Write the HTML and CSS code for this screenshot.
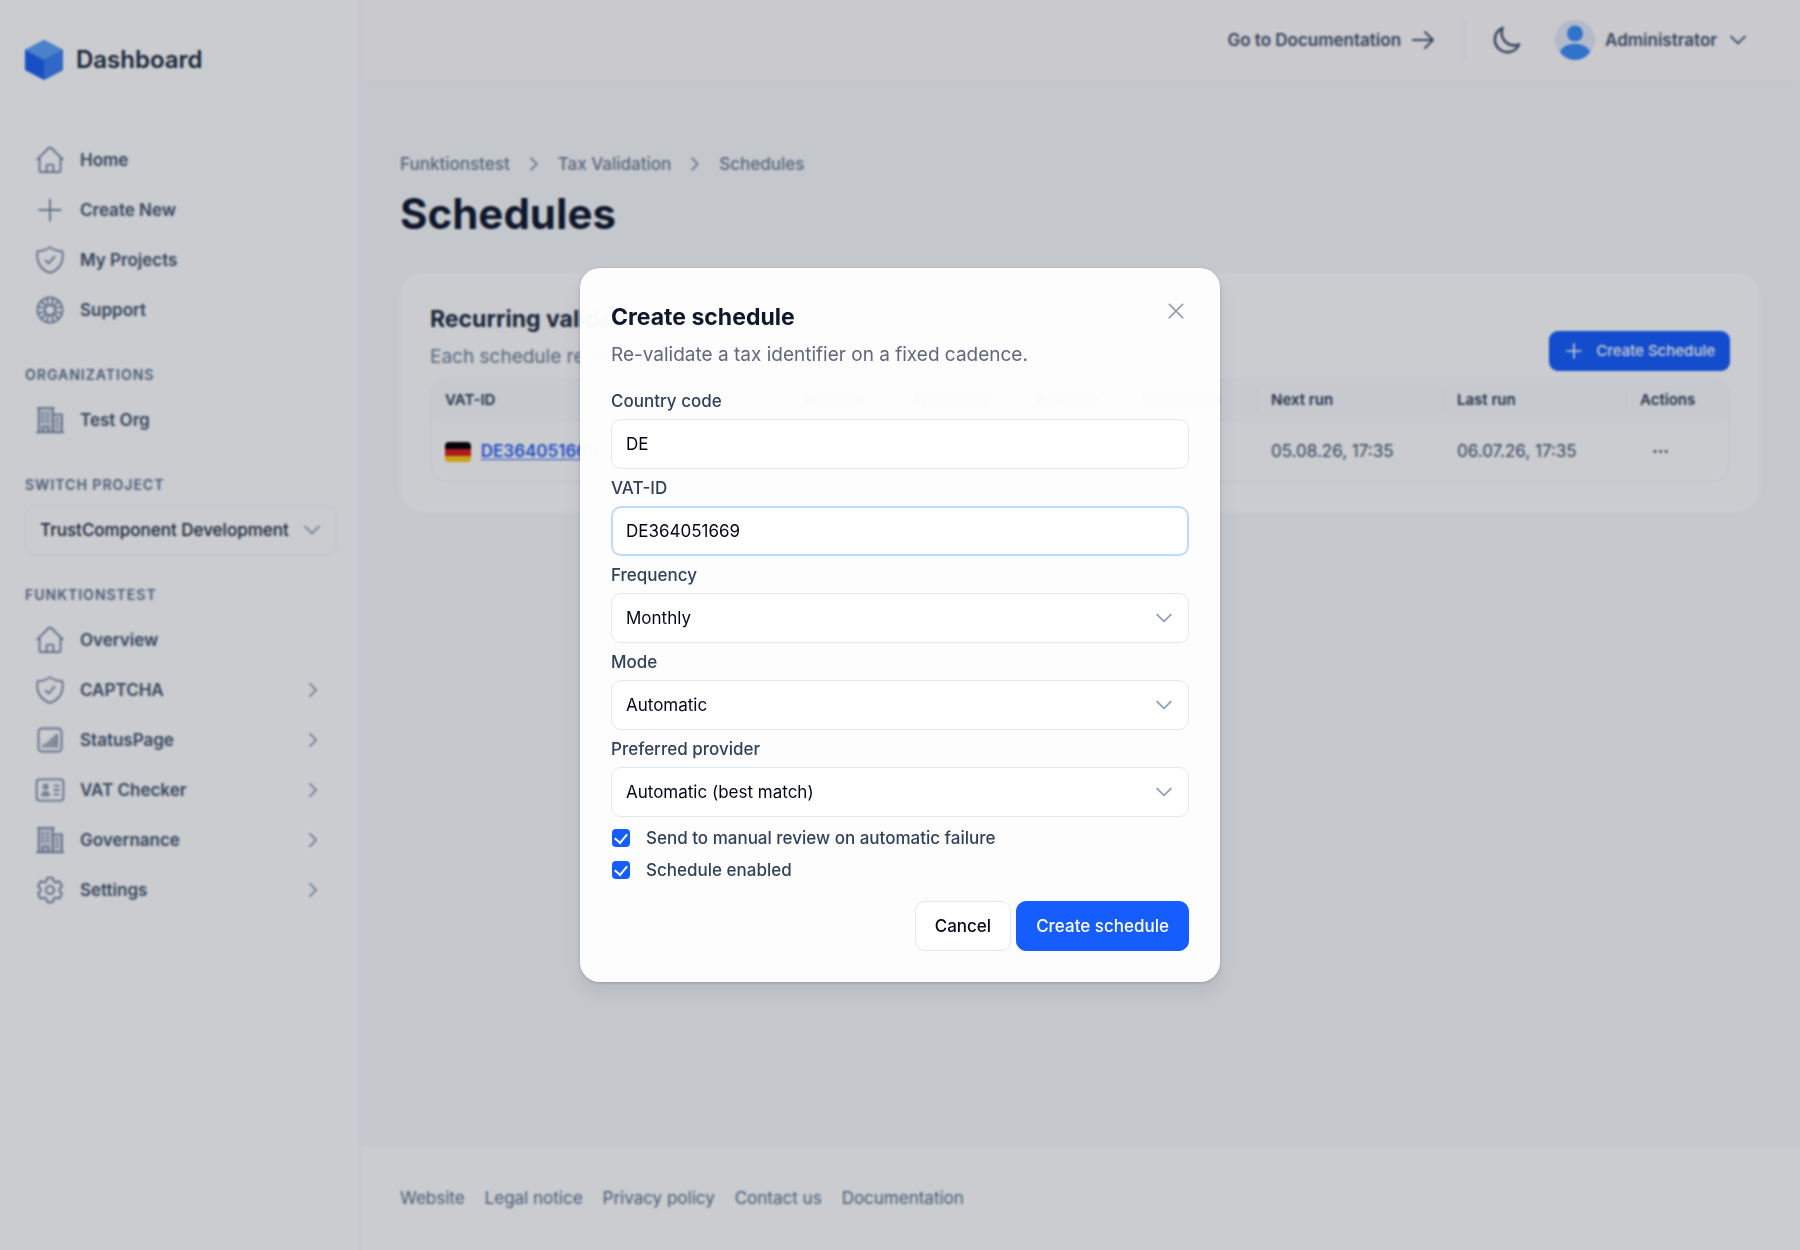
FILE: index.html
```html
<!DOCTYPE html>
<html lang="en">
  <head>
    <meta charset="utf-8">
    <title>Schedules - Dashboard</title>
    <meta name="viewport" content="width=device-width, initial-scale=1">
    <link rel="stylesheet" href="styles.css">
  </head>
  <body>
    <!-- icons used more than once -->
    <svg class="sprite" aria-hidden="true">
      <symbol id="home" viewBox="0 0 24 24"><path d="M1.800 11.500L11.200 2.200a1.130 1.130 0 0 1 1.600 0L22.200 11.500M3.600 10v10.500c0 .6.500 1.100 1.100 1.100h14.600c.6 0 1.100-.5 1.100-1.100V10M9.300 21.600v-4.800c0-.6.500-1.100 1.100-1.100h3.200c.6 0 1.100.5 1.100 1.100v4.800"/></symbol>
      <symbol id="shield" viewBox="0 0 24 24"><path d="M8.500 12.500L11 14.800 15.500 9.300M12 1.700A15 15 0 0 1 2.200 4.900C1.800 6.200 1.800 7.600 1.800 9c0 6.200 4.200 11.500 10.200 13.300C18 20.500 22.200 15.200 22.200 9c0-1.400 0-2.800-.4-4.100A15 15 0 0 1 12 1.700z"/></symbol>
      <symbol id="building" viewBox="0 0 24 24"><path class="shade" d="M3 2.250h11.250v19.500H3zM14.250 7.500h7.250v14.250h-7.250z"/><path d="M1.500 21.800h21M3 2.250v19.500m11.250-19.500v19.500M21.500 7.500v14.250M6 6.750h.75m-.75 3h.75m-.75 3h.75m3-6h.75m-.75 3h.75m-.75 3h.75M6.200 21.750v-3.400c0-.6.5-1.100 1.100-1.100h2.300c.6 0 1.100.5 1.100 1.100v3.400M2.250 2.250h12.750M14.250 7.500h7.500M17.250 11.250h.7m-.7 3h.7m-.7 3h.7"/></symbol>
      <symbol id="plus" viewBox="0 0 24 24"><path d="M12 3.500v17M3.500 12h17"/></symbol>
      <symbol id="right" viewBox="0 0 24 24"><path d="M8.250 4.500l7.500 7.500-7.500 7.500"/></symbol>
      <symbol id="down" viewBox="0 0 24 24"><path d="M19.500 8.250l-7.500 7.500-7.500-7.500"/></symbol>
    </svg>

    <div class="app">
      <aside class="sidebar">
        <a class="brand" href="#">
          <svg class="brand-logo" viewBox="0 0 38 40">
            <path d="M19 0l19 10v20L19 40 0 30V10z" fill="#1d5ff0"/>
            <path d="M19 0l19 10-19 10L0 10z" fill="#5ba0f7"/>
            <path d="M38 10v20L19 40V20z" fill="#3b7ff2"/>
          </svg>
          <span>Dashboard</span>
        </a>

        <nav class="nav">
          <a href="#"><svg class="icon"><use href="#home"/></svg>Home</a>
          <a href="#"><svg class="icon"><use href="#plus"/></svg>Create New</a>
          <a href="#"><svg class="icon"><use href="#shield"/></svg>My Projects</a>
          <a href="#"><svg class="icon" viewBox="0 0 24 24"><circle cx="12" cy="12" r="10"/><circle cx="12" cy="12" r="4"/><path d="M9.500 2.500l1 5.500M14.500 2.500l-1 5.500M9.500 21.500l1-5.500M14.500 21.500l-1-5.500M2.500 9.500l5.500 1M2.500 14.500l5.500-1M21.500 9.500l-5.500 1M21.500 14.500l-5.500-1M5 5l4 4M19 5l-4 4M5 19l4-4M19 19l-4-4"/></svg>Support</a>
        </nav>

        <h2 class="nav-title">Organizations</h2>
        <nav class="nav">
          <a href="#"><svg class="icon"><use href="#building"/></svg>Test Org</a>
        </nav>

        <label class="nav-title" for="project">Switch project</label>
        <div class="select project-select">
          <select id="project"><option>TrustComponent Development</option></select>
          <svg class="icon"><use href="#down"/></svg>
        </div>

        <h2 class="nav-title">Funktionstest</h2>
        <nav class="nav">
          <a href="#"><svg class="icon"><use href="#home"/></svg>Overview</a>
          <a href="#"><svg class="icon"><use href="#shield"/></svg>CAPTCHA<svg class="icon arrow"><use href="#right"/></svg></a>
          <a href="#"><svg class="icon" viewBox="0 0 24 24"><rect x="2.800" y="2.800" width="18.400" height="18.400" rx="2.800"/><path d="M6.500 17.500v-1.500M8.800 17.500V15M11 17.500v-4.500M13.300 17.500v-6.500M15.500 17.500v-8.500M17.500 17.500V7.500"/></svg>StatusPage<svg class="icon arrow"><use href="#right"/></svg></a>
          <a href="#"><svg class="icon" viewBox="0 0 24 24"><rect x="1.300" y="3.500" width="21.400" height="17" rx="2.500"/><circle class="solid" cx="8.500" cy="9.300" r="2.500"/><path class="solid" d="M4.800 16.500c0-5 7.400-5 7.400 0-2 1-5.400 1-7.400 0z"/><path d="M15.500 8.500H19M15.500 12H19M15.500 15.500H19"/></svg>VAT Checker<svg class="icon arrow"><use href="#right"/></svg></a>
          <a href="#"><svg class="icon"><use href="#building"/></svg>Governance<svg class="icon arrow"><use href="#right"/></svg></a>
          <a href="#"><svg class="icon" viewBox="1 1 22 22"><path d="M9.600 3.900c.1-.5.500-.9 1.100-.9h2.600c.5 0 1 .4 1.100.9l.2 1.300c.1.400.3.700.6.800l.3.200c.3.200.7.200 1.100.1l1.200-.5c.5-.2 1.100 0 1.400.5l1.300 2.200c.3.500.2 1.100-.3 1.400l-1 .9c-.3.200-.4.600-.4 1v.3c0 .4.100.7.400 1l1 .8c.4.400.5 1 .3 1.400l-1.300 2.300c-.3.500-.9.700-1.400.5l-1.200-.5c-.4-.1-.8-.1-1.100.1l-.3.200c-.3.200-.5.500-.6.800l-.2 1.300c-.1.600-.6 1-1.100 1h-2.600c-.6 0-1-.4-1.100-1l-.2-1.200c-.1-.4-.3-.7-.6-.9l-.3-.2c-.3-.2-.7-.2-1.100-.1l-1.200.5c-.5.200-1.100 0-1.400-.5l-1.300-2.300c-.3-.400-.2-1 .3-1.400l1-.8c.3-.3.400-.6.400-1v-.3c0-.400-.1-.8-.4-1l-1-.9c-.500-.3-.600-.9-.3-1.400l1.300-2.200c.3-.5.900-.7 1.400-.5l1.200.5c.4.100.8.100 1.100-.1l.3-.2c.3-.1.500-.4.600-.8z"/><circle cx="12" cy="12" r="3"/></svg>Settings<svg class="icon arrow"><use href="#right"/></svg></a>
        </nav>
      </aside>

      <div class="page">
        <header class="topbar">
          <a class="docs" href="#">Go to Documentation <svg class="icon" viewBox="0 0 24 24"><path d="M14 4l8 8-8 8M22 12H2"/></svg></a>
          <button class="theme" type="button" aria-label="Dark mode"><svg class="icon" viewBox="0 0 24 24"><path d="M21.750 15A9.700 9.700 0 0 1 18 15.750 9.750 9.750 0 0 1 9 2.250 9.750 9.750 0 1 0 21.750 15z"/></svg></button>
          <button class="user" type="button">
            <svg class="avatar" viewBox="0 0 40 40"><circle cx="20" cy="20" r="20" fill="#e3e8f8"/><circle cx="20" cy="13.500" r="8" fill="#3c8df8"/><path d="M5 32c4-11 26-11 30 0-7 10.500-23 10.500-30 0z" fill="#3c8df8"/></svg>
            Administrator
            <svg class="icon"><use href="#down"/></svg>
          </button>
        </header>

        <main class="content">
          <nav class="breadcrumb">
            <a href="#">Funktionstest</a>
            <svg class="icon"><use href="#right"/></svg>
            <a href="#">Tax Validation</a>
            <svg class="icon"><use href="#right"/></svg>
            <a href="#">Schedules</a>
          </nav>
          <h1>Schedules</h1>

          <section class="card">
            <div class="card-head">
              <div>
                <h2>Recurring validations</h2>
                <p>Each schedule re-validates</p>
              </div>
              <button class="btn-small" type="button"><svg class="icon"><use href="#plus"/></svg>Create Schedule</button>
            </div>
            <table>
              <thead>
                <tr>
                  <th class="col-vat">VAT-ID</th>
                  <th class="col-enabled">Enabled</th>
                  <th class="col-frequency">Frequency</th>
                  <th class="col-mode">Advance</th>
                  <th>Requested</th>
                  <th class="col-next">Next run</th>
                  <th class="col-last">Last run</th>
                  <th class="col-actions">Actions</th>
                </tr>
              </thead>
              <tbody>
                <tr>
                  <td>
                    <svg class="flag" viewBox="0 0 26 20"><path fill="#000" d="M0 0h26v7H0z"/><path fill="#d81e1e" d="M0 7h26v7H0z"/><path fill="#fdca0f" d="M0 14h26v6H0z"/></svg>
                    <a href="#">DE364051669</a>
                  </td>
                  <td></td>
                  <td></td>
                  <td></td>
                  <td></td>
                  <td>05.08.26, 17:35</td>
                  <td>06.07.26, 17:35</td>
                  <td><button class="more" type="button" aria-label="More">&middot;&middot;&middot;</button></td>
                </tr>
              </tbody>
            </table>
          </section>
        </main>

        <footer class="footer">
          <a href="#">Website</a>
          <a href="#">Legal notice</a>
          <a href="#">Privacy policy</a>
          <a href="#">Contact us</a>
          <a href="#">Documentation</a>
        </footer>
      </div>
    </div>

    <div class="backdrop">
      <form class="modal" role="dialog" aria-labelledby="modal-title">
        <button class="close" type="button" aria-label="Close"><svg class="icon" viewBox="0 0 24 24"><path d="M3 3l18 18M21 3L3 21"/></svg></button>
        <h2 id="modal-title">Create schedule</h2>
        <p class="lead">Re-validate a tax identifier on a fixed cadence.</p>

        <div class="field">
          <label for="country">Country code</label>
          <input id="country" type="text" value="DE">
        </div>
        <div class="field">
          <label for="vat">VAT-ID</label>
          <input id="vat" class="active" type="text" value="DE364051669">
        </div>
        <div class="field">
          <label for="frequency">Frequency</label>
          <div class="select">
            <select id="frequency"><option>Monthly</option></select>
            <svg class="icon"><use href="#down"/></svg>
          </div>
        </div>
        <div class="field">
          <label for="mode">Mode</label>
          <div class="select">
            <select id="mode"><option>Automatic</option></select>
            <svg class="icon"><use href="#down"/></svg>
          </div>
        </div>
        <div class="field">
          <label for="provider">Preferred provider</label>
          <div class="select">
            <select id="provider"><option>Automatic (best match)</option></select>
            <svg class="icon"><use href="#down"/></svg>
          </div>
        </div>

        <label class="check"><input type="checkbox" checked>Send to manual review on automatic failure</label>
        <label class="check"><input type="checkbox" checked>Schedule enabled</label>

        <div class="actions">
          <button class="btn" type="button">Cancel</button>
          <button class="btn primary" type="button">Create schedule</button>
        </div>
      </form>
    </div>
  </body>
</html>
```

FILE: styles.css
```css
* {
  box-sizing: border-box;
}
body {
  margin: 0;
  font-family: Inter, "Liberation Sans", sans-serif;
  font-size: 17px;
  line-height: 28px;
  color: #314158;
}
h1, h2, p {
  margin: 0;
}
a {
  color: inherit;
  text-decoration: none;
}
button, input, select {
  font: inherit;
  color: inherit;
}
button {
  border: 0;
  padding: 0;
  background: none;
}
.sprite {
  display: none;
}
.icon {
  width: 30px;
  height: 30px;
  flex: none;
  fill: none;
  stroke: currentColor;
  stroke-width: 1.5;
  stroke-linecap: round;
  stroke-linejoin: round;
}
.shade {
  fill: currentColor;
  fill-opacity: 0.3;
  stroke: none;
}
.solid {
  fill: currentColor;
  fill-opacity: 0.8;
  stroke: none;
}

/* layout */
.app {
  display: flex;
  min-height: 100vh;
}
.sidebar {
  width: 360px;
  flex: none;
  padding: 35px 22px 0 25px;
  border-right: 1px solid #f1f5f9;
  background: #fff;
}
.page {
  flex: 1;
  display: flex;
  flex-direction: column;
  background: #f8fafc;
}

/* sidebar */
.brand {
  display: flex;
  align-items: center;
  gap: 13px;
  height: 50px;
  margin-bottom: 50px;
  font-size: 24px;
  font-weight: 600;
  color: #1d293d;
}
.brand-logo {
  width: 38px;
  height: 40px;
}
.nav a {
  display: flex;
  align-items: center;
  gap: 15px;
  height: 50px;
  padding: 0 14px 0 10px;
  font-weight: 600;
  color: #45556c;
}
.nav .icon {
  color: #7c8aa5;
}
.nav .arrow {
  width: 20px;
  height: 20px;
  margin-left: auto;
  stroke-width: 2;
}
.nav-title {
  display: block;
  margin: 30px 0 10px;
  font-size: 14px;
  line-height: 20px;
  font-weight: 600;
  letter-spacing: 1px;
  text-transform: uppercase;
  color: #62748e;
}
.select {
  position: relative;
}
.select select {
  width: 100%;
  height: 50px;
  padding: 0 40px 0 14px;
  border: 1px solid #e2e8f0;
  border-radius: 10px;
  appearance: none;
  background: #fff;
  color: #020618;
}
.select .icon {
  position: absolute;
  top: 14px;
  right: 14px;
  width: 22px;
  height: 22px;
  stroke-width: 2;
  color: #90a1b9;
  pointer-events: none;
}
.project-select select {
  border-color: #f1f5f9;
  font-weight: 500;
  color: #1d293d;
}

/* top bar */
.topbar {
  display: flex;
  align-items: center;
  justify-content: flex-end;
  height: 80px;
  padding-right: 51px;
  background: #fffbfd;
  font-weight: 600;
  color: #45556c;
}
.docs {
  display: flex;
  align-items: center;
  gap: 10px;
  height: 40px;
  padding-right: 29px;
  border-right: 1px solid #f1f1f6;
}
.theme {
  display: flex;
  margin: 0 33px 0 26px;
}
.theme .icon {
  width: 31px;
  height: 31px;
  stroke-width: 2;
}
.docs .icon {
  width: 24px;
  height: 24px;
  stroke-width: 2;
}
.user {
  display: flex;
  align-items: center;
  gap: 10px;
  font-weight: 600;
}
.user .icon {
  width: 22px;
  height: 22px;
  stroke-width: 2;
}
.avatar {
  width: 40px;
  height: 40px;
}

/* page content */
.content {
  flex: 1;
  padding: 70px 40px 0;
}
.breadcrumb {
  display: flex;
  align-items: center;
  gap: 15px;
  font-weight: 500;
  color: #717f96;
}
.breadcrumb .icon {
  width: 18px;
  height: 18px;
  stroke-width: 2;
}
h1 {
  margin-top: 7px;
  font-size: 42px;
  line-height: 58px;
  font-weight: 700;
  color: #0f172b;
}
.card {
  margin-top: 30px;
  padding: 29px 30px 30px;
  border-radius: 24px;
  background: #fff;
}
.card-head {
  display: flex;
  justify-content: space-between;
  align-items: flex-end;
  height: 77px;
  padding-bottom: 8px;
}
.card h2 {
  font-size: 23px;
  line-height: 34px;
  font-weight: 700;
  color: #1d293d;
}
.card p {
  margin-top: 7px;
  font-size: 19px;
  color: #717f96;
}
.card-head > div {
  align-self: flex-start;
}
.btn-small {
  display: flex;
  align-items: center;
  gap: 12px;
  height: 40px;
  padding: 0 15px;
  border-radius: 9px;
  background: #155dfc;
  font-size: 15px;
  font-weight: 500;
  color: #fff;
}
.btn-small .icon {
  width: 20px;
  height: 20px;
  stroke-width: 2;
}
table {
  width: 100%;
  table-layout: fixed;
  border: 1px solid #f1f5f9;
  border-radius: 16px;
  border-spacing: 0;
}
th {
  position: relative;
  height: 41px;
  padding: 0 14px;
  border-bottom: 1px solid #f1f5f9;
  background: #fbfcfd;
  font-size: 15px;
  font-weight: 600;
  text-align: left;
}
th:first-child {
  border-top-left-radius: 15px;
}
th:last-child {
  border-top-right-radius: 15px;
}
/* short divider between the head cells */
th + th::before {
  content: "";
  position: absolute;
  top: 8px;
  bottom: 8px;
  left: 0;
  border-left: 1px solid #f1f5f9;
}
td {
  height: 60px;
  padding: 0 14px;
  color: #45556c;
}
td a {
  vertical-align: middle;
  font-weight: 600;
  text-decoration: underline;
  color: #2b63f5;
}
.col-vat {
  width: 359px;
}
.col-enabled {
  width: 110px;
}
.col-frequency {
  width: 121px;
}
.col-mode {
  width: 107px;
}
.col-next {
  width: 186px;
}
.col-last {
  width: 183px;
}
.col-actions {
  width: 103px;
}
.flag {
  width: 26px;
  height: 20px;
  margin-right: 5px;
  border-radius: 4px;
  vertical-align: middle;
}
.more {
  margin-left: 12px;
  font-weight: 700;
}

/* footer */
.footer {
  display: flex;
  gap: 20px;
  padding: 38px 40px;
  border-top: 1px solid #f5f7fa;
  background: #fff;
  color: #62748e;
}

/* dialog */
.backdrop {
  position: fixed;
  inset: 0;
  display: flex;
  align-items: center;
  justify-content: center;
  background: rgba(15, 23, 42, 0.22);
  backdrop-filter: blur(1px);
}
.modal {
  position: relative;
  width: 640px;
  padding: 32px 31px 31px;
  border-radius: 20px;
  background: rgba(254, 254, 255, 0.98);
  box-shadow: 0 10px 18px rgba(15, 23, 42, 0.08), 0 1px 3px rgba(15, 23, 42, 0.2);
}
.modal h2 {
  font-size: 23px;
  line-height: 34px;
  font-weight: 700;
  color: #0f172b;
}
.lead {
  margin: 7px 0 18px;
  font-size: 19px;
  color: #62677a;
}
.close {
  position: absolute;
  top: 34px;
  right: 35px;
  display: flex;
  color: #8b8f9c;
}
.close .icon {
  width: 18px;
  height: 18px;
  stroke-width: 2;
}
.field {
  margin-bottom: 5px;
}
.field label {
  display: block;
  margin-bottom: 4px;
  font-weight: 500;
}
.field input {
  display: block;
  width: 100%;
  height: 50px;
  padding: 0 14px;
  border: 1px solid #e2e8f0;
  border-radius: 10px;
  background: #fff;
  color: #020618;
}
.field .active {
  padding: 0 13px;
  border: 2px solid #bedbff;
}
.check {
  display: flex;
  align-items: center;
  gap: 16px;
  height: 32px;
  padding-left: 1px;
  font-weight: 500;
}
.check input {
  display: grid;
  place-items: center;
  width: 18px;
  height: 18px;
  margin: 0;
  border-radius: 4px;
  appearance: none;
  background: #155dfc;
}
.check input:checked::before {
  content: "";
  width: 6px;
  height: 10px;
  margin-top: -2px;
  border: solid #fff;
  border-width: 0 2px 2px 0;
  transform: rotate(40deg);
}
.actions {
  display: flex;
  justify-content: flex-end;
  gap: 5px;
  margin-top: 15px;
}
.btn {
  height: 50px;
  padding: 0 19px;
  border: 1px solid #e2e8f0;
  border-radius: 10px;
  background: #fff;
  font-weight: 500;
  color: #020618;
}
.primary {
  border-color: #155dfc;
  background: #155dfc;
  color: #fff;
}
```
